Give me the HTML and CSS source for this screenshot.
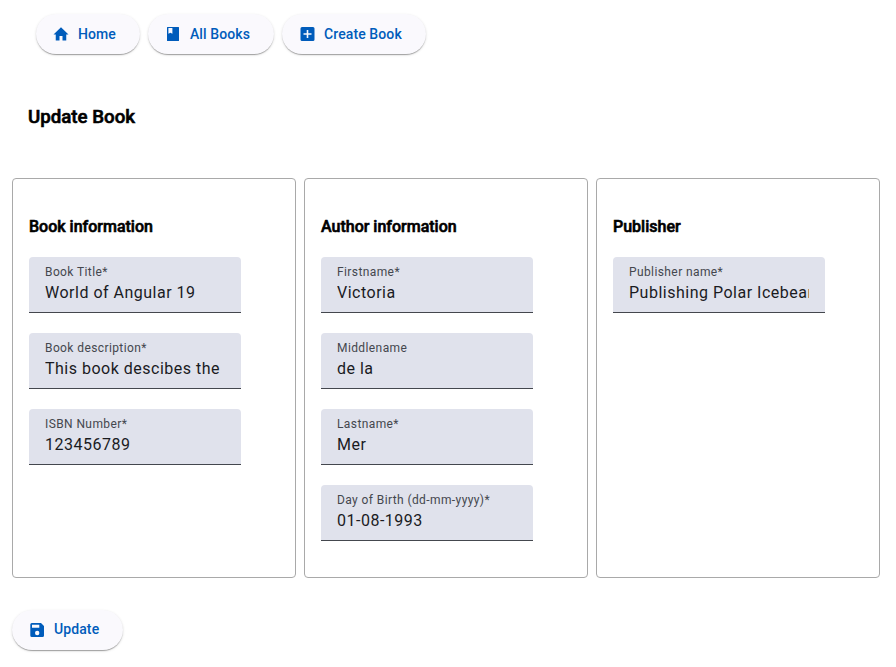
FILE: index.html
```html
<!DOCTYPE html>
<html lang="en">
<head>
<meta charset="utf-8">
<title>Update Book</title>
<link rel="stylesheet" href="styles.css">
</head>
<body>
<nav class="nav">
  <button class="btn"><svg class="icon" viewBox="0 0 24 24"><path d="M10 20.500v-6h4v6h5v-8h3L12 3 2 12.500h3v8z"/></svg>Home</button>
  <button class="btn"><svg class="icon" viewBox="0 0 18 18"><path fill-rule="evenodd" d="M3.500 2h11a.5.5 0 0 1 .5.5v13a.5.5 0 0 1-.5.5h-11a.5.5 0 0 1-.5-.5v-13a.5.5 0 0 1 .5-.5zM4.400 3v5.800L6.400 7.700l2 1.100V3z"/></svg>All Books</button>
  <button class="btn"><svg class="icon" viewBox="0 0 18 18"><path fill-rule="evenodd" d="M4 2h11a1.500 1.500 0 0 1 1.500 1.500v11A1.500 1.500 0 0 1 15 16H4a1.500 1.500 0 0 1-1.500-1.500v-11A1.500 1.500 0 0 1 4 2zM8.700 5v3.200H5.500v1.600h3.200V13h1.600V9.800h3.200V8.200h-3.200V5z"/></svg>Create Book</button>
</nav>
<h1 class="title">Update Book</h1>
<form class="form">
  <div class="cards">
    <section class="card">
      <h2 class="heading">Book information</h2>
      <label class="field"><span class="label">Book Title*</span><input class="input" value="World of Angular 19"></label>
      <label class="field"><span class="label">Book description*</span><input class="input" value="This book descibes the"></label>
      <label class="field"><span class="label">ISBN Number*</span><input class="input" value="123456789"></label>
    </section>
    <section class="card">
      <h2 class="heading">Author information</h2>
      <label class="field"><span class="label">Firstname*</span><input class="input" value="Victoria"></label>
      <label class="field"><span class="label">Middlename</span><input class="input" value="de la"></label>
      <label class="field"><span class="label">Lastname*</span><input class="input" value="Mer"></label>
      <label class="field"><span class="label">Day of Birth (dd-mm-yyyy)*</span><input class="input" value="01-08-1993"></label>
    </section>
    <section class="card">
      <h2 class="heading">Publisher</h2>
      <label class="field"><span class="label">Publisher name*</span><input class="input" value="Publishing Polar Icebears"></label>
    </section>
  </div>
  <button class="btn" type="button"><svg class="icon" viewBox="0 0 18 18"><path fill-rule="evenodd" d="M3.800 2h9.200l3 3v9.500a1.500 1.500 0 0 1-1.500 1.500H3.800a1.500 1.500 0 0 1-1.500-1.500v-11A1.500 1.500 0 0 1 3.800 2zM4 3.800v3h7.300v-3zM9.200 9.800a2.200 2.200 0 1 0 0 4.400 2.200 2.200 0 0 0 0-4.400z"/></svg><span class="update-text">Update</span></button>
</form>
</body>
</html>
```
FILE: styles.css
```css
* { box-sizing: border-box; }
body { margin: 0; min-height: 667px; background: #fff; color: #000; font-family: Roboto, sans-serif; }
.nav { display: flex; gap: 8px; padding: 14px 36px 0; }
.btn {
  display: inline-flex; align-items: center; gap: 8px; height: 40px; padding: 0 24px 0 16px;
  border: 0; border-radius: 20px; background: #faf9fd; color: #005cbb;
  font: 500 14px/20px Roboto, sans-serif; letter-spacing: 0.1px;
  box-shadow: 0 2px 1px -1px rgba(0,0,0,.2), 0 1px 1px 0 rgba(0,0,0,.14), 0 1px 3px 0 rgba(0,0,0,.12);
}
.icon { width: 18px; height: 18px; fill: currentColor; flex: none; }
.update-text { margin-bottom: 2px; }
.title { margin: 50px 28px 0; font-size: 18.72px; line-height: 26px; font-weight: 500; -webkit-text-stroke: 0.6px currentColor; }
.form { padding: 0 12px; margin-top: 48px; }
.cards { display: flex; gap: 8px; margin-bottom: 32px; }
.card { width: 284px; height: 400px; padding: 36px 16px 0; border: 1px solid #a9a9a9; border-radius: 4px; }
.heading { margin: 0 0 18px; font-size: 16px; line-height: 24px; font-weight: 500; -webkit-text-stroke: 0.6px currentColor; }
.field {
  display: block; width: 212px; height: 56px; margin-bottom: 20px; padding: 6px 16px 0;
  background: #e0e2ec; border-bottom: 1px solid #44474e; border-radius: 4px 4px 0 0;
}
.label { display: block; font-size: 12px; line-height: 18px; letter-spacing: 0.4px; color: #44474e; white-space: nowrap; }
.input {
  display: block; width: 100%; height: 24px; padding: 0; border: 0; outline: 0; background: none;
  font: 400 16px/24px Roboto, sans-serif; letter-spacing: 0.5px; color: #1a1b1f;
}
```
